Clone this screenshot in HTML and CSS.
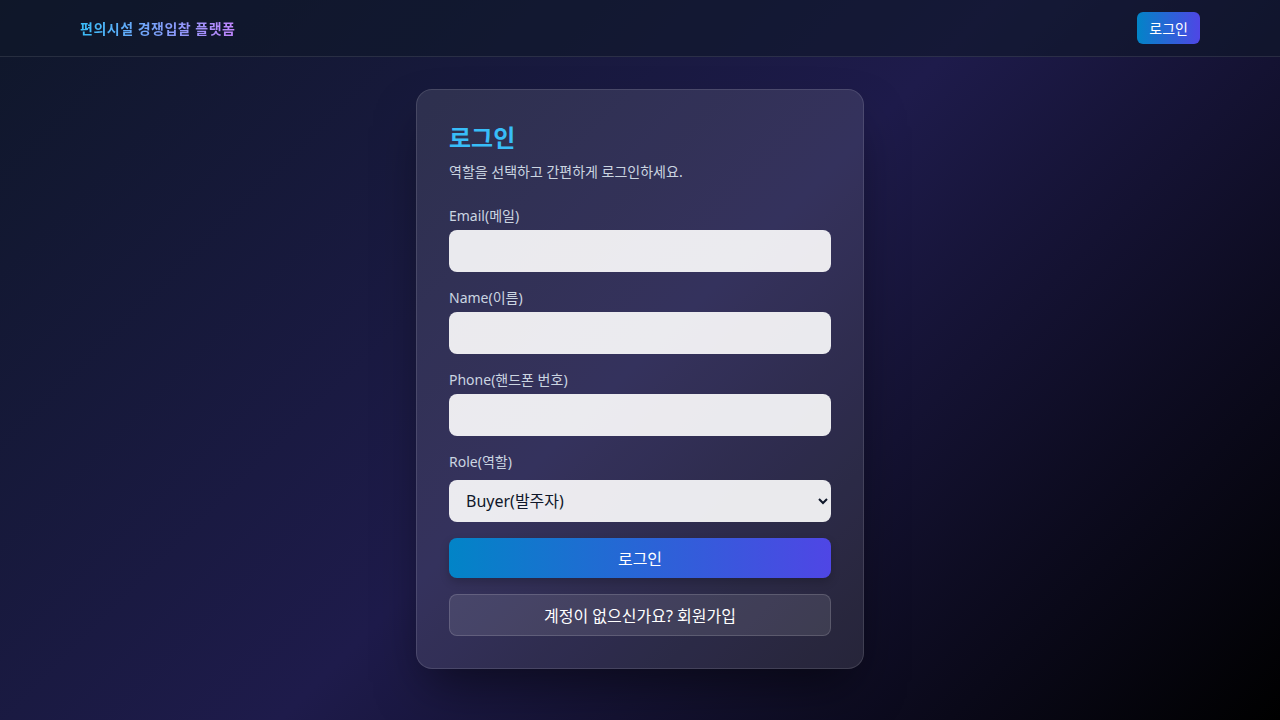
FILE: index.html
```html
<!DOCTYPE html>
<html lang="ko">
<head>
    <meta charset="UTF-8">
    <title>로그인</title>
    <link rel="stylesheet" href="styles.css">
</head>
<body>
<header class="topbar">
    <div class="topbar-inner">
        <a class="brand" href="/">편의시설 경쟁입찰 플랫폼</a>
        <button class="top-login" type="button">로그인</button>
    </div>
</header>

<main class="page">
    <form class="card" method="post" action="/login">
        <h1 class="card-title">로그인</h1>
        <p class="card-sub">역할을 선택하고 간편하게 로그인하세요.</p>

        <label class="field-label" for="email">Email(메일)</label>
        <input class="field" type="email" id="email" name="email">

        <label class="field-label" for="name">Name(이름)</label>
        <input class="field" type="text" id="name" name="name">

        <label class="field-label" for="phone">Phone(핸드폰 번호)</label>
        <input class="field" type="tel" id="phone" name="phone">

        <label class="field-label" for="role">Role(역할)</label>
        <select class="field field-select" id="role" name="role">
            <option value="buyer">Buyer(발주자)</option>
            <option value="supplier">Supplier(공급자)</option>
        </select>

        <button class="btn-main" type="submit">로그인</button>
        <button class="btn-ghost" type="button">계정이 없으신가요? 회원가입</button>
    </form>
</main>
</body>
</html>
```

FILE: styles.css
```css
*{
    box-sizing: border-box;
}
html, body{
    margin: 0;
    min-height: 100%;
}
body{
    min-height: 720px;
    font-family: "Noto Sans", "Noto Sans CJK KR", sans-serif;
    color: #e2e8f0;
    background: linear-gradient(135deg, #0f172a 0%, #1e1b4b 50%, #000000 100%);
}

.topbar{
    height: 57px;
    background-color: rgba(15, 23, 42, 0.6);
    border-bottom: 1px solid rgba(255, 255, 255, 0.1);
}
.topbar-inner{
    max-width: 1152px;
    height: 56px;
    margin: 0 auto;
    padding: 0 16px;
    display: flex;
    align-items: center;
    justify-content: space-between;
}
.brand{
    font-size: 14px;
    font-weight: 700;
    letter-spacing: 0.5px;
    text-decoration: none;
    background: linear-gradient(90deg, #38bdf8, #c084fc);
    -webkit-background-clip: text;
    background-clip: text;
    color: transparent;
}
.top-login{
    height: 32px;
    padding: 0 12px;
    border: 0;
    border-radius: 6px;
    font-family: inherit;
    font-size: 14px;
    color: #fff;
    background: linear-gradient(90deg, #0284c7, #4f46e5);
}

.page{
    display: flex;
    justify-content: center;
    padding-top: 32px;
}
.card{
    width: 448px;
    padding: 32px;
    display: flex;
    flex-direction: column;
    border: 1px solid rgba(255, 255, 255, 0.12);
    border-radius: 16px;
    background-color: rgba(255, 255, 255, 0.1);
    box-shadow: 0 25px 50px -12px rgba(0, 0, 0, 0.5);
}
.card-title{
    margin: 0;
    font-size: 24px;
    line-height: 32px;
    font-weight: 700;
    color: #38bdf8;
}
.card-sub{
    margin: 8px 0 24px;
    font-size: 14px;
    line-height: 20px;
    color: #cbd5e1;
}
.field-label{
    font-size: 14px;
    line-height: 20px;
    color: #cbd5e1;
    margin-bottom: 4px;
}
.field{
    height: 42px;
    margin-bottom: 16px;
    padding: 0 16px;
    border: 0;
    border-radius: 8px;
    font-family: inherit;
    font-size: 16px;
    color: #0f172a;
    background-color: rgba(255, 255, 255, 0.9);
}
.field-select{
    margin-top: 4px;
    padding-left: 13px;
}
.btn-main{
    height: 40px;
    margin-bottom: 16px;
    padding-bottom: 2px;
    border: 0;
    border-radius: 8px;
    font-family: inherit;
    font-size: 16px;
    color: #fff;
    background: linear-gradient(90deg, #0284c7, #4f46e5);
    box-shadow: 0 4px 10px rgba(0, 0, 0, 0.2);
}
.btn-ghost{
    height: 42px;
    border: 1px solid rgba(255, 255, 255, 0.15);
    border-radius: 8px;
    font-family: inherit;
    font-size: 16px;
    color: #fff;
    background-color: rgba(255, 255, 255, 0.1);
}
```
